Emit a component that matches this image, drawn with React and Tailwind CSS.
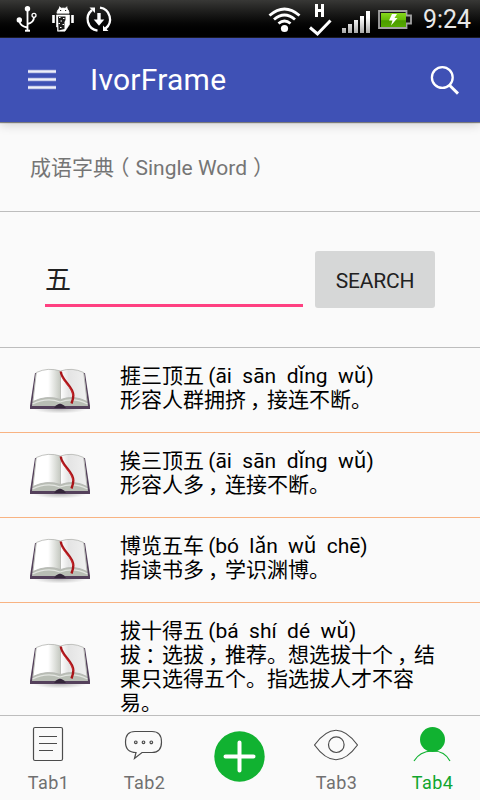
import React from "react";

const entries = [
  { title: "捱三顶五", pinyin: "(āi  sān  dǐng  wǔ)", lines: ["形容人群拥挤，接连不断。"], line: "border-[#f8b382]" },
  { title: "挨三顶五", pinyin: "(āi  sān  dǐng  wǔ)", lines: ["形容人多，连接不断。"], line: "border-[#f8b382]" },
  { title: "博览五车", pinyin: "(bó  lǎn  wǔ  chē)", lines: ["指读书多，学识渊博。"], line: "border-[#f8b382]", tight: true },
  {
    title: "拔十得五",
    pinyin: "(bá  shí  dé  wǔ)",
    lines: ["拔：选拔，推荐。想选拔十个，结", "果只选得五个。指选拔人才不容", "易。"],
    line: "border-transparent",
  },
];

/* Commas and colons sit in the middle of their full-width cell. */
function Han({ text }) {
  return text.split(/([，：])/).map((part, i) =>
    part === "，" ? (
      <span key={i} className="inline-block w-[21px] pl-[4px] [font-feature-settings:'halt']">
        {part}
      </span>
    ) : part === "：" ? (
      <span key={i} className="inline-block w-[21px] pl-[4px] [font-feature-settings:'halt']">
        {part}
      </span>
    ) : (
      <span key={i}>{part}</span>
    )
  );
}

function StatusBar() {
  return (
    <div className="h-[38px] shrink-0 bg-linear-to-b from-[#383836] to-black border-b border-[#1b1b22]">
      <svg width="480" height="37" viewBox="0 0 480 37" fill="none" stroke="#fff">
        <defs>
          <linearGradient id="cell" x1="0" y1="11" x2="0" y2="33" gradientUnits="userSpaceOnUse">
            <stop offset="0.3" stopColor="#fff" />
            <stop offset="1" stopColor="#aaa" />
          </linearGradient>
          <linearGradient id="batt" x1="0" y1="0" x2="0" y2="1">
            <stop offset="0" stopColor="#86d81c" />
            <stop offset="0.5" stopColor="#66bb08" />
            <stop offset="0.55" stopColor="#4c9c00" />
            <stop offset="1" stopColor="#55aa00" />
          </linearGradient>
        </defs>
        <path d="M27.5 9V31M19.5 21Q20 26 27 27.5M27.5 24Q34 22.5 34 17" strokeWidth="1.8" />
        <circle cx="27.5" cy="8.7" r="2.7" fill="#fff" stroke="none" />
        <circle cx="19.3" cy="20" r="2.7" fill="#fff" stroke="none" />
        <circle cx="34" cy="15.3" r="2" strokeWidth="1.3" />
        <path d="M25 30.7h5" strokeWidth="2" />

        <path d="M57 13.2Q57.5 9 61 8.3L59.5 6.5M69 13.2Q68.5 9 65.500 8.300L67 6.500M57 13.200H69Q69 8 63 8T57 13.200Z" fill="#fff" strokeWidth="0.7" />
        <path d="M60 10.500h1.200M65 10.500h1.200" stroke="#222" />
        <path d="M53.500 15v8M72.500 15v8" strokeWidth="2.600" />
        <path d="M56.500 15H69.500V24.500L65 31.200H57.500V27H56.500Z" fill="#fff" strokeWidth="0.600" />
        <path d="M58 16.500H65.500V20L64.500 22V29L58.500 30.500Z" fill="#1a1a1a" stroke="none" />
        <path d="M59 17.500h1.500M63 18.500h1.500M60.500 21h1.500M58.500 23.500h1.500M62.500 24.500h1.500M60 27.500h1.500" strokeWidth="1.200" />

        <path d="M92 10A11.700 11.700 0 0 0 97.500 30.700M100 7.700A11.700 11.700 0 0 1 105.500 28.500" strokeWidth="2.300" />
        <path d="M89.500 7.500H95V13ZM108.500 31H103V25.500Z" fill="#fff" stroke="none" />
        <path d="M99 13V20" strokeWidth="3.400" />
        <path d="M93.700 19.500H104.300L99 25.800Z" fill="#fff" stroke="none" />

        <path d="M269.500 15.500Q284.500 2.500 299.500 15.500M274 19.500Q284.500 10.500 295 19.500M278.500 23.500Q284.500 18.500 290.500 23.500" strokeWidth="2.900" />
        <circle cx="284.500" cy="28.500" r="3.600" fill="#fff" stroke="none" />
        <path d="M316.500 4V17M322.500 4V17M316.500 10.500H322.500" strokeWidth="3" />
        <path d="M310 27.500L317.500 34L330.500 20.500" strokeWidth="3" />
        <g fill="url(#cell)" stroke="none">
          <path d="M342 28h4v5h-4zM348 24h4v9h-4zM354 20h4v13h-4zM360 16h4v17h-4zM366 11h4v22h-4z" />
        </g>
        <path d="M379 11H406.500V15.500H411V23.500H406.500V28H379Z" fill="#161616" stroke="#a4a4a4" strokeWidth="1.800" />
        <path d="M381 13h25v14h-25z" fill="url(#batt)" stroke="none" />
        <path d="M392 14H397L394.500 18H397.500L391 25.500L392.500 20.500H389Z" fill="#fff" stroke="none" />
        <text x="423" y="28" textLength="48" lengthAdjust="spacingAndGlyphs" fontSize="25" fill="#e8e8e8" stroke="none" className="font-[Roboto]">
          9:24
        </text>
      </svg>
    </div>
  );
}

function Toolbar() {
  return (
    <header className="z-10 flex h-[84px] shrink-0 items-center bg-[#3f51b5] pl-7 pr-[20px] text-white shadow-[0_1px_1px_rgba(0,0,0,0.45),0_3px_10px_rgba(0,0,0,0.16)]">
      <svg width="28" height="22" viewBox="0 0 28 22" className="shrink-0">
        <path d="M0 2.500h28M0 10.500h28M0 18.500h28" stroke="#fff" strokeOpacity="0.55" strokeWidth="3.600" />
        <path d="M0 2.500h28M0 10.500h28M0 18.500h28" stroke="#fff" strokeOpacity="0.800" strokeWidth="1.800" />
      </svg>
      <h1 className="ml-[34px] flex-1 text-[30px] leading-9 tracking-[0.25px]">IvorFrame</h1>
      <svg width="30" height="30" viewBox="0 0 30 30" fill="none" stroke="#fff">
        <circle cx="12.300" cy="12.500" r="10.400" strokeWidth="2.300" />
        <path d="M19.300 20L28 28.600" strokeWidth="2.900" />
      </svg>
    </header>
  );
}

function Book() {
  return (
    <svg width="64" height="48" viewBox="28 367 64 48" className="shrink-0">
      <defs>
        <linearGradient id="left">
          <stop offset="0.550" stopColor="#fff" />
          <stop offset="1" stopColor="#c4c8c0" />
        </linearGradient>
        <linearGradient id="right">
          <stop offset="0" stopColor="#fff" />
          <stop offset="0.300" stopColor="#e4e4e4" />
          <stop offset="1" stopColor="#f0f0f0" />
        </linearGradient>
        <radialGradient id="shade">
          <stop offset="0" stopColor="#000" stopOpacity="0.260" />
          <stop offset="1" stopColor="#000" stopOpacity="0" />
        </radialGradient>
      </defs>
      <ellipse cx="60" cy="409" rx="27" ry="4.500" fill="url(#shade)" />
      <path d="M35 373L30 406V409H90V406L85 373Z" fill="#54405b" />
      <path d="M35.800 374L32 406H55L60 403.500L65 406H88L84.200 374Z" fill="#b9beb5" />
      <path d="M36.300 372.500Q48 367 60.500 371V399.500Q47 394.500 33 401.500Z" fill="url(#left)" stroke="#b2b4b0" strokeWidth="0.800" />
      <path d="M60.500 371Q72 367 83.700 372.500L87 401.500Q74 394.500 60.500 399.500Z" fill="url(#right)" stroke="#b2b4b0" strokeWidth="0.800" />
      <path d="M32.500 404Q47 397 60 402Q74 397 87.500 404" fill="none" stroke="#e3e5e1" strokeWidth="1.200" />
      <path d="M54 408Q57 404 60 404T66 408Z" fill="#34263a" />
      <path d="M60.800 371.500C61.500 381 73.500 386 73.300 395.500Q73.300 399 71.500 403.500" fill="none" stroke="#a91419" strokeWidth="2.400" />
      <path d="M62 377C65 384 72.500 388 73 396" fill="none" stroke="#d9363a" strokeWidth="0.700" />
    </svg>
  );
}

function Entry({ item, last }) {
  return (
    <li className={`flex border-b pl-7 ${item.line} ${last ? "h-[112px]" : "h-[85px]"}`}>
      <div className={last ? "pt-[39px]" : "pt-[19px]"}>
        <Book />
      </div>
      <div className="ml-7 whitespace-pre pt-4 text-[21px] leading-6 text-black">
        <p>
          {item.title} <span className={`-ml-px ${item.tight ? "tracking-[-0.05px]" : ""}`}>{item.pinyin}</span>
        </p>
        {item.lines.map((line) => (
          <p key={line} className="flex">
            <Han text={line} />
          </p>
        ))}
      </div>
    </li>
  );
}

function Tab({ label, active, children }) {
  return (
    <div className={`flex w-24 flex-col items-center pt-2 text-[18px] leading-5 tracking-[0.4px] ${active ? "text-[#11a62e]" : "text-[#707070]"}`}>
      <svg width="48" height="44" viewBox="0 0 48 44" fill="none" stroke="#4c4c4c" strokeWidth="1.200">
        {children}
      </svg>
      <span className="mt-[5px] pl-px">{label}</span>
    </div>
  );
}

export default function App() {
  return (
    <div className="flex h-[800px] w-[480px] flex-col overflow-hidden bg-[#fafafa] font-[Roboto,'Noto_Sans_CJK_SC',sans-serif]">
      <StatusBar />
      <Toolbar />
      <div className="flex h-[90px] shrink-0 items-center border-b border-[#bdbdbd] pl-[30px] pt-[3px] text-[21px] leading-6 text-[#757575]">
        <span>成语字典</span>
        <span className="ml-[5px] mr-[6px] [font-feature-settings:'halt']">（</span>
        <span>Single Word</span>
        <span className="ml-[6px] [font-feature-settings:'halt']">）</span>
      </div>
      <div className="flex h-[136px] shrink-0 border-b border-[#bdbdbd] pl-[45px] pt-[39px]">
        <div className="h-14 w-[258px] border-b-3 border-[#ff4081] pt-[13px] text-[26px] leading-8 text-[#212121]">五</div>
        <button className="ml-3 h-[57px] w-[120px] rounded-[3px] bg-[#d6d7d7] pt-1 text-[21px] tracking-[-0.2px] text-[#212121]">SEARCH</button>
      </div>
      <ul className="h-[367px] shrink-0 overflow-hidden">
        {entries.map((item, i) => (
          <Entry key={item.title} item={item} last={i === 3} />
        ))}
      </ul>
      <nav className="flex h-[85px] shrink-0 border-t border-[#bdbdbd]">
        <Tab label="Tab1">
          <rect x="9.500" y="3.500" width="29" height="33" rx="1.500" />
          <path d="M15 12.500h18M15 19.500h18M15 26.500h14" />
        </Tab>
        <Tab label="Tab2">
          <path d="M15 7.500H32Q41.500 7.500 41.500 18T32 28.500H22L14.500 34.500L16 28.500Q5.500 28.500 5.500 18T15 7.500Z" />
          <path d="M14.500 18.300a1.300 1.300 0 1 0 2.600 0a1.300 1.300 0 1 0-2.600 0M22.200 18.300a1.300 1.300 0 1 0 2.600 0a1.300 1.300 0 1 0-2.600 0M30 18.300a1.300 1.300 0 1 0 2.600 0a1.300 1.300 0 1 0-2.600 0" />
        </Tab>
        <div className="flex w-24 justify-center pt-[15px]">
          <svg width="52" height="52" viewBox="0 0 52 52">
            <circle cx="25.500" cy="25.500" r="25.200" fill="#11b231" />
            <path d="M25.500 11.500V39.500M11.500 25.500H39.500" stroke="#fff" strokeWidth="4" strokeLinecap="round" />
          </svg>
        </div>
        <Tab label="Tab3">
          <path d="M2.500 21Q24 -8.500 45.500 21Q24 50.500 2.500 21Z" />
          <circle cx="24.300" cy="20.700" r="7.800" />
        </Tab>
        <Tab label="Tab4" active>
          <circle cx="24.500" cy="15.500" r="12.500" fill="#11b231" stroke="none" />
          <path d="M6 37Q11.500 27.500 24 27T42 37" stroke="#11b231" />
        </Tab>
      </nav>
    </div>
  );
}
